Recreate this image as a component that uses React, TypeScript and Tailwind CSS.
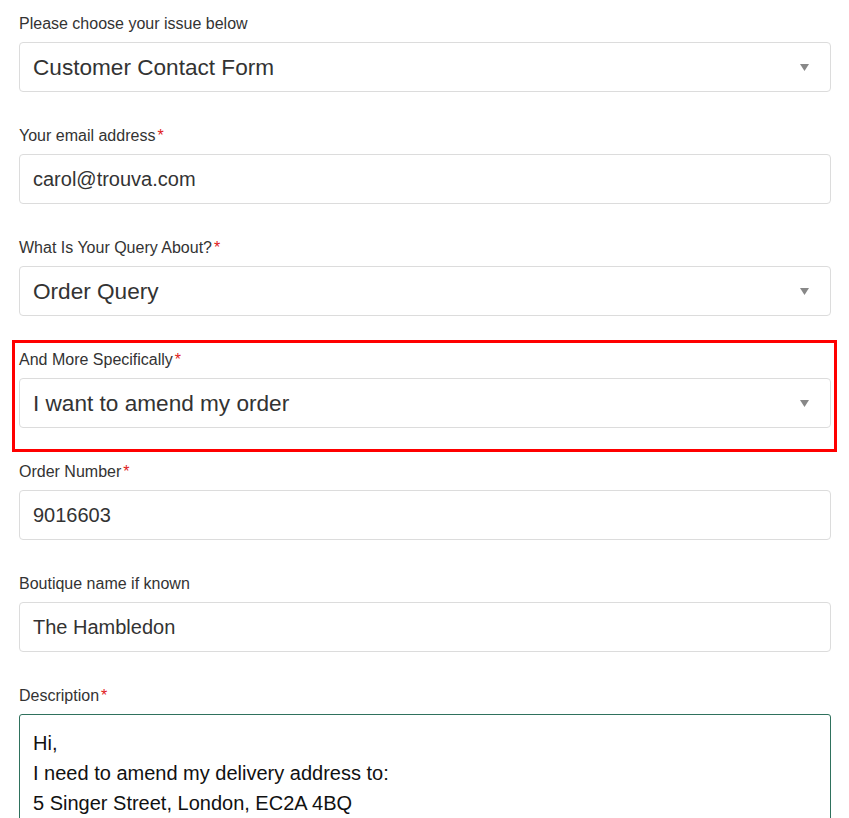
const fieldBox = "h-[50px] w-full rounded-[4px] border border-[#dcdcdc] bg-white flex items-center pl-[13px] pr-5 text-[#333]";

function Label({ text, required }: { text: string; required?: boolean }) {
  return (
    <div className="text-[16px] leading-5 text-[#333] mb-[8px]">
      {text}
      {required && <span className="text-[#e02020] ml-[2px]">*</span>}
    </div>
  );
}

function SelectField({ label, value, required }: { label: string; value: string; required?: boolean }) {
  return (
    <div className="mb-[34px]">
      <Label text={label} required={required} />
      <div className={`${fieldBox} justify-between`}>
        <span className="text-[22.6px] pt-[2px]">{value}</span>
        <svg width="9" height="7" viewBox="0 0 9 7" className="mr-[1px]">
          <path d="M0 0 H9 L4.5 7 Z" fill="#888" />
        </svg>
      </div>
    </div>
  );
}

function InputField({ label, value, required }: { label: string; value: string; required?: boolean }) {
  return (
    <div className="mb-[34px]">
      <Label text={label} required={required} />
      <div className={fieldBox}>
        <span className="text-[20px]">{value}</span>
      </div>
    </div>
  );
}

export default function App() {
  return (
    <div className="h-[818px] overflow-hidden bg-white px-[19px] pt-[14px] font-['Liberation_Sans',Arial,sans-serif]">
      <div className="w-[812px]">
        <SelectField label="Please choose your issue below" value="Customer Contact Form" />
        <InputField label="Your email address" value="carol@trouva.com" required />
        <SelectField label="What Is Your Query About?" value="Order Query" required />
        <div className="relative">
          {/* highlight around the field */}
          <div className="absolute left-[-7px] right-[-6px] top-[-10px] bottom-[-24px] border-[3px] border-[#ff0000] pointer-events-none" />
          <SelectField label="And More Specifically" value="I want to amend my order" required />
        </div>
        <InputField label="Order Number" value="9016603" required />
        <InputField label="Boutique name if known" value="The Hambledon" />
        <div>
          <Label text="Description" required />
          <div className="h-[200px] w-full rounded-[3px] border-[1.5px] border-[#2f715d] pl-[13px] pt-[13px] text-[20px] leading-[30px] text-[#111]">
            <div>Hi,</div>
            <div>I need to amend my delivery address to:</div>
            <div>5 Singer Street, London, EC2A 4BQ</div>
          </div>
        </div>
      </div>
    </div>
  );
}
